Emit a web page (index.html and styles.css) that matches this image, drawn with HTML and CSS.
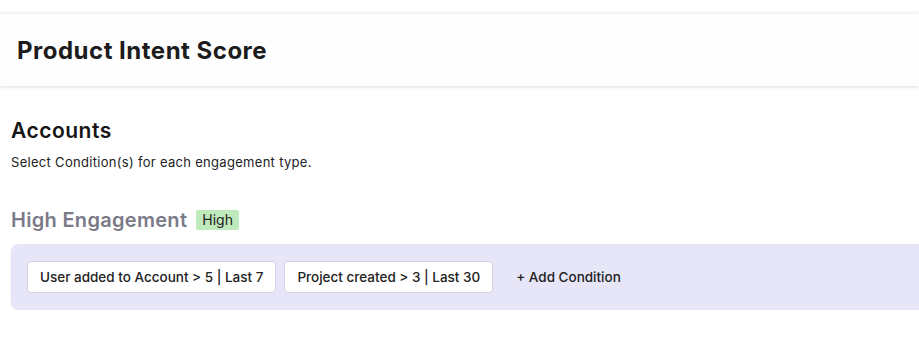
FILE: index.html
```html
<!DOCTYPE html>
<html lang="en">
<head>
    <meta charset="UTF-8" />
    <title>Product Intent Score</title>
    <link rel="stylesheet" href="styles.css">
</head>
<body>
    <header class="topbar">
        <h1>Product Intent Score</h1>
    </header>

    <main class="content">
        <h2>Accounts</h2>
        <p class="hint">Select Condition(s) for each engagement type.</p>

        <section class="engagement">
            <div class="engagement-title">
                <h3>High Engagement</h3>
                <span class="badge">High</span>
            </div>

            <div class="conditions">
                <button class="chip">User added to Account &gt; 5 | Last 7</button>
                <button class="chip">Project created &gt; 3 | Last 30</button>
                <button class="add">+ Add Condition</button>
            </div>
        </section>
    </main>
</body>
</html>
```

FILE: styles.css
```css
body {
    font-family: Inter, 'Noto Sans', sans-serif;
    background-color: #fff;
    color: #1c1c1c;
    margin: 0;
    padding-top: 14px;
    overflow-x: hidden;
}

.topbar {
    height: 72px;
    display: flex;
    align-items: center;
    padding: 0 17px;
    background-color: #fefefe;
    box-shadow: 0 1px 4px rgba(0, 0, 0, 0.12), 0 -1px 4px rgba(0, 0, 0, 0.06);
}

h1 {
    margin: 0;
    font-size: 24px;
    font-weight: 700;
    letter-spacing: 0.5px;
    color: #1c1c1c;
}

.content {
    padding: 32px 0 0 11px;
}

h2 {
    margin: 0;
    font-size: 21px;
    font-weight: 600;
    letter-spacing: 0.5px;
    color: #161616;
}

.hint {
    margin: 11px 0 0;
    font-size: 13px;
    letter-spacing: 0.3px;
    color: #222;
}

.engagement {
    margin-top: 38px;
}

.engagement-title {
    display: flex;
    align-items: center;
    gap: 9px;
}

h3 {
    margin: 0;
    font-size: 20px;
    font-weight: 600;
    letter-spacing: 0.3px;
    color: #7b7a88;
}

.badge {
    background-color: #bfeabb;
    color: #222;
    font-size: 14px;
    padding: 1px 6px;
    border-radius: 2px;
    line-height: 18px;
}

.conditions {
    margin: 12px -20px 0 0;
    background-color: #e7e6f8;
    border-radius: 8px;
    box-shadow: 0 1px 3px rgba(0, 0, 0, 0.08);
    padding: 17px 16px 17px;
    min-height: 31px;
    display: flex;
    align-items: center;
    gap: 8px;
}

.chip {
    font-family: inherit;
    font-size: 13.5px;
    font-weight: 500;
    color: #222;
    background-color: #fff;
    border: 1px solid #d3d2e4;
    border-radius: 4px;
    height: 32px;
    padding: 0 12px;
}

.add {
    font-family: inherit;
    font-size: 13.5px;
    font-weight: 500;
    color: #222;
    background: none;
    border: none;
    padding: 0 15px;
    height: 32px;
}
```
